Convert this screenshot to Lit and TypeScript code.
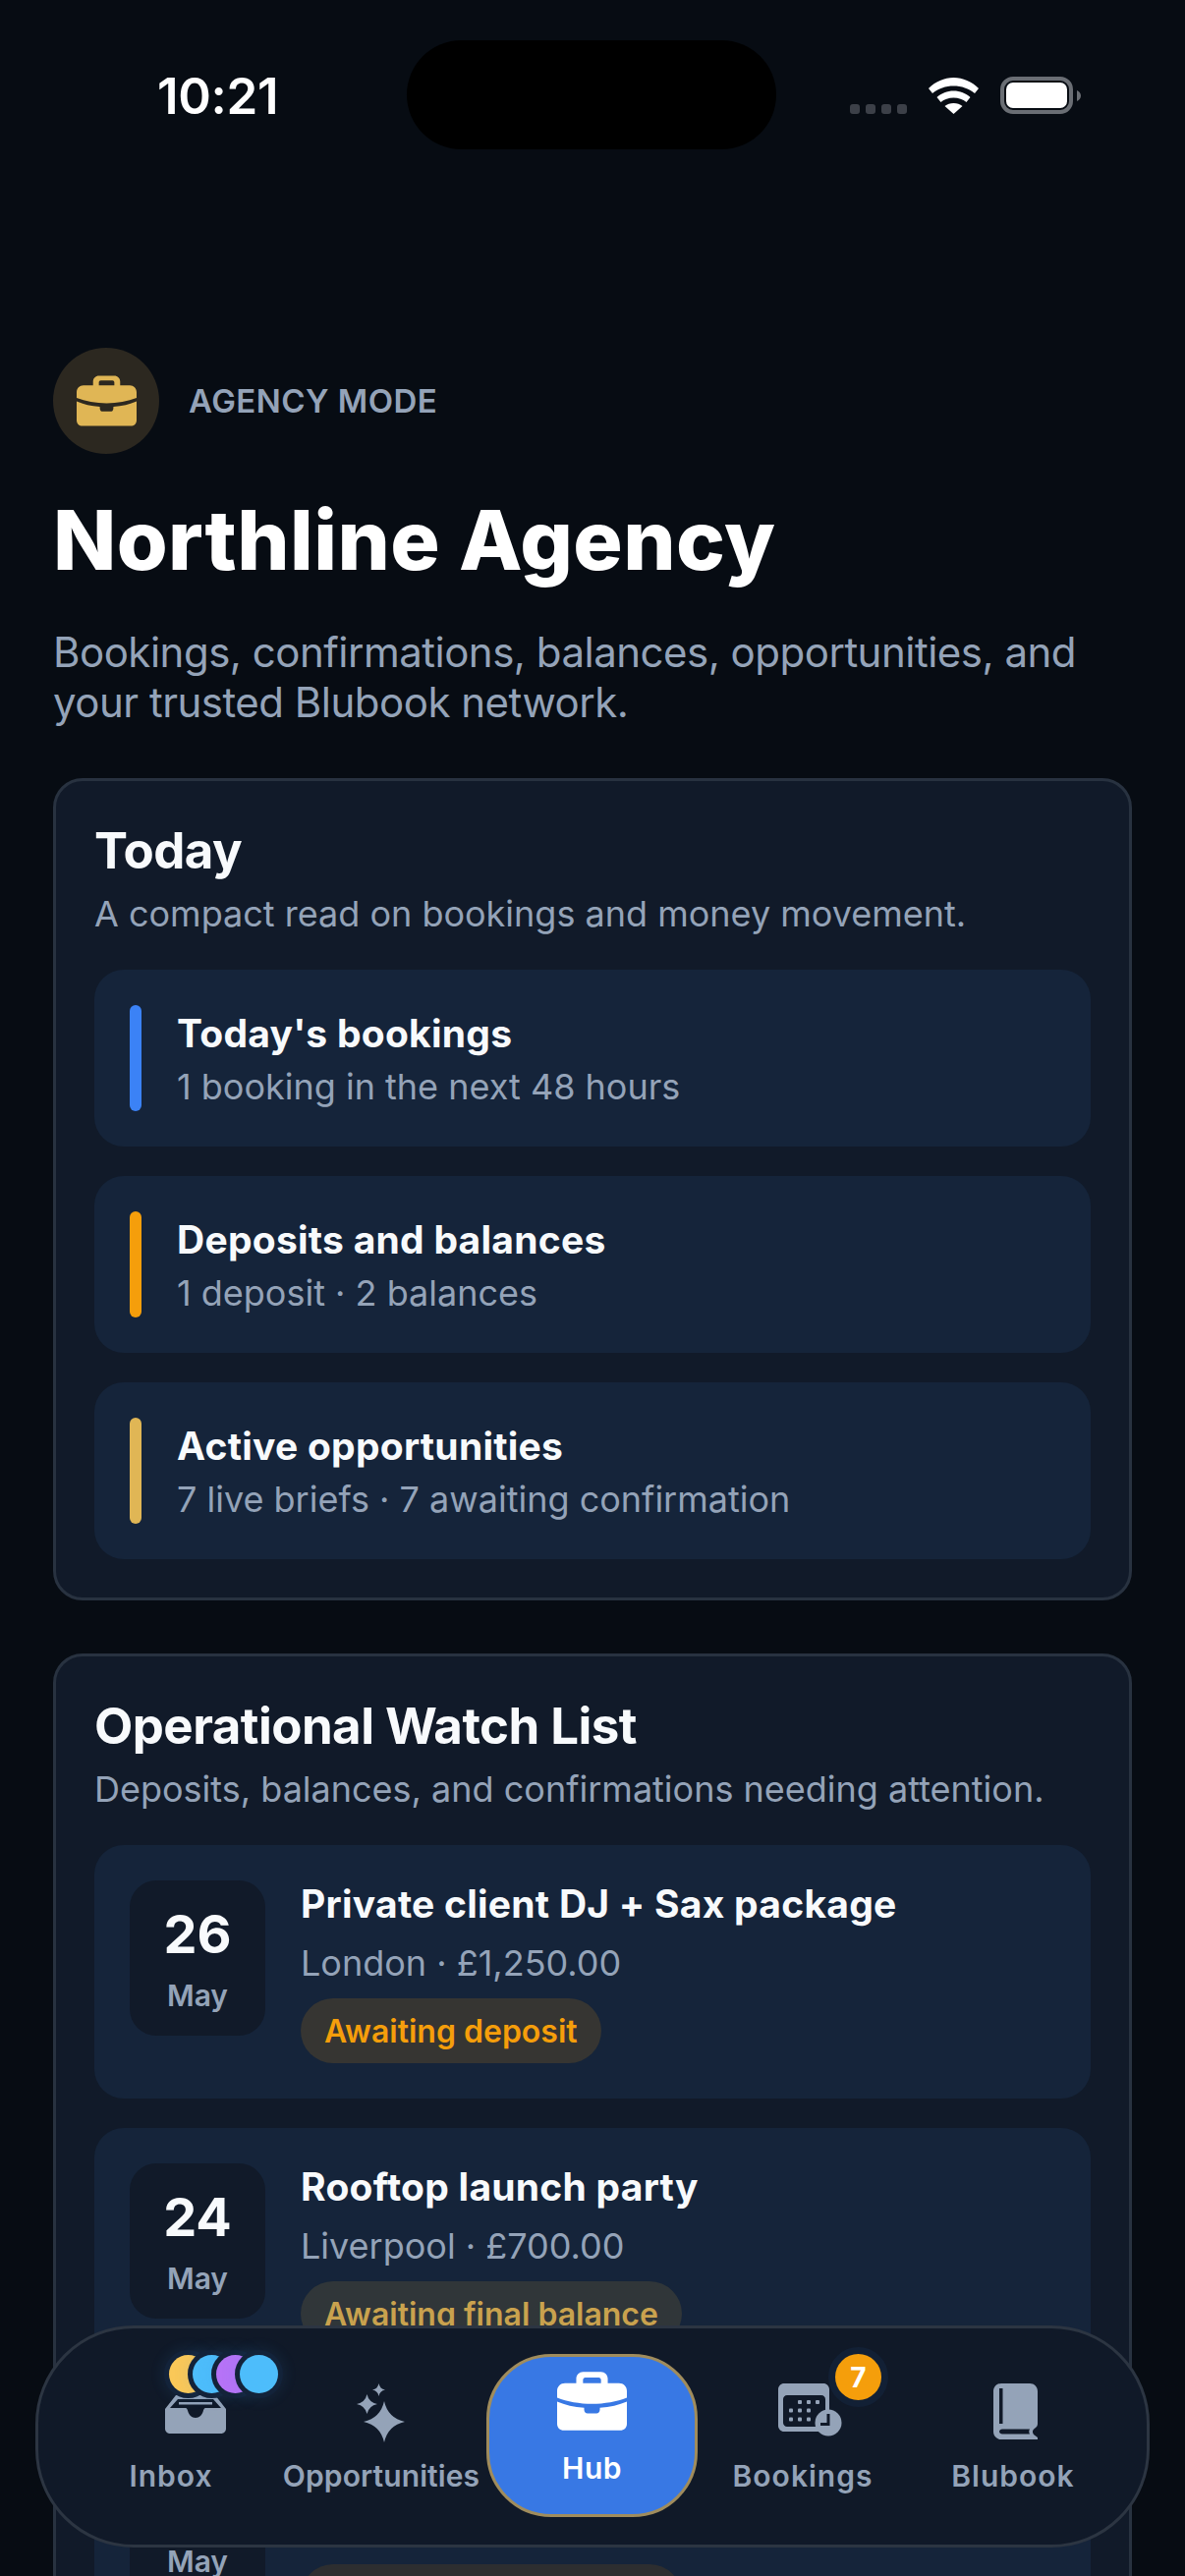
import { LitElement, html, css, svg } from "lit";
import { customElement } from "lit/decorators.js";

const briefcase = svg`
  <path fill-rule="evenodd" d="M17 10V6C17 2.700 19.700 0 23 0H39C42.300 0 45 2.700 45 6V10H55C59 10 62 13 62 17V23C53 26.500 42 28.500 31 28.500C20 28.500 9 26.500 0 23V17C0 13 3 10 7 10H17ZM23 10H39V7C39 5.900 38.100 5 37 5H25C23.900 5 23 5.900 23 7V10Z"/>
  <path d="M0 26.500C7 29.500 15 31.500 24 32V33.500C24 36 25.500 37 27 37H35C36.500 37 38 36 38 33.500V32C47 31.500 55 29.500 62 26.500V46C62 49.500 59.500 52 56 52H6C2.500 52 0 49.500 0 46V26.500Z"/>
`;

const summary = [
  ["blue", "Today's bookings", "1 booking in the next 48 hours"],
  ["amber", "Deposits and balances", "1 deposit · 2 balances"],
  ["gold", "Active opportunities", "7 live briefs · 7 awaiting confirmation"],
];
const events = [
  ["26", "Private client DJ + Sax package", "London · £1,250.00", "Awaiting deposit", "dep"],
  ["24", "Rooftop launch party", "Liverpool · £700.00", "Awaiting final balance", "bal"],
  ["22", "Summer garden social", "Manchester · £950.00", "Awaiting confirmation", "conf"],
];

@customElement("app-root")
export class AppRoot extends LitElement {
  static styles = css`
    :host {
      display: block;
      position: relative;
      width: 1206px;
      height: 2622px;
      overflow: hidden;
      background: #070c13;
      font-family: Inter, "Noto Sans", sans-serif;
      color: #f8fafc;
    }
    .status {
      display: flex;
      align-items: flex-start;
      height: 354px;
      box-sizing: border-box;
      padding: 41px 0 0 160px;
    }
    .time {
      width: 254px;
      margin-top: 27px;
      font-size: 51px;
      line-height: 60px;
      font-weight: 600;
      color: #fff;
      letter-spacing: -0.3px;
    }
    .island {
      width: 376px;
      height: 111px;
      border-radius: 56px;
      background: #000;
    }
    .sys {
      display: flex;
      align-items: flex-end;
      margin: 37px 0 0 75px;
    }
    .dots { display: flex; gap: 6px; margin: 0 22px 0 0; }
    .dots i { width: 10px; height: 10px; border-radius: 3px; background: #3c4048; display: block; }
    .wifi { width: 51px; height: 37px; margin-right: 22px; }
    .battery { width: 82px; height: 38px; }
    main { padding: 0 54px; }
    .mode { display: flex; align-items: center; gap: 30px; }
    .mode-icon {
      width: 108px;
      height: 108px;
      border-radius: 50%;
      background: #2c2820;
      display: flex;
      align-items: center;
      justify-content: center;
    }
    .mode-icon svg { width: 61px; height: 52px; fill: #e0b655; }
    .mode-label {
      font-size: 33px;
      font-weight: 600;
      letter-spacing: 0.45px;
      color: #94a3b8;
    }
    h1 {
      margin: 37px 0 0;
      font-size: 84px;
      line-height: 102px;
      font-weight: 800;
      letter-spacing: 0.4px;
      color: #fff;
    }
    .lede {
      margin: 37px 0 0;
      font-size: 42px;
      line-height: 51px;
      font-weight: 400;
      letter-spacing: -0.5px;
      color: #94a3b8;
    }
    .card {
      margin-top: 52px;
      box-sizing: border-box;
      background: #111a29;
      border: 3px solid #283240;
      border-radius: 30px;
      padding: 41px 39px 39px;
    }
    .card + .card { margin-top: 54px; }
    h2 {
      margin: 0;
      font-size: 51px;
      line-height: 60px;
      font-weight: 700;
      letter-spacing: -0.55px;
      color: #f8fafc;
    }
    .sub {
      margin: 12px 0 0;
      font-size: 36px;
      line-height: 45px;
      color: #94a3b8;
    }
    .rows { display: flex; flex-direction: column; gap: 30px; margin-top: 34px; }
    .row {
      background: #15243a;
      border-radius: 30px;
      display: flex;
      align-items: center;
      gap: 36px;
      height: 180px;
      box-sizing: border-box;
      padding: 0 36px;
    }
    .bar { width: 12px; height: 108px; border-radius: 6px; flex: none; }
    .blue { background: #3b82f6; }
    .amber { background: #f59e0b; }
    .gold { background: #e0b655; }
    .t { font-size: 39px; line-height: 48px; font-weight: 700; letter-spacing: 0.25px; color: #f8fafc; }
    .d { margin-top: 8px; font-size: 36px; line-height: 45px; color: #94a3b8; }
    .row-text { padding-top: 3px; }
    .event {
      background: #15243a;
      border-radius: 30px;
      display: flex;
      gap: 36px;
      height: 258px;
      box-sizing: border-box;
      padding: 36px;
    }
    .date {
      width: 138px;
      height: 158px;
      box-sizing: border-box;
      flex: none;
      background: #111a29;
      border-radius: 27px;
      display: flex;
      flex-direction: column;
      align-items: center;
      padding-top: 25px;
    }
    .date b { font-size: 54px; line-height: 60px; font-weight: 700; }
    .date span { margin-top: 14px; font-size: 30px; line-height: 36px; font-weight: 600; color: #94a3b8; }
    .info { display: flex; flex-direction: column; align-items: flex-start; }
    .info .d { margin-top: 14px; }
    .pill {
      margin-top: 13px;
      height: 66px;
      padding: 0 24px;
      border-radius: 33px;
      display: flex;
      align-items: center;
      font-size: 32px;
      font-weight: 600;
    }
    .dep { background: #363532; color: #f59e0b; }
    .bal { background: #303639; color: #c9a24e; }
    .conf { background: #2d2e30; color: #c9a24e; }
    nav {
      position: absolute;
      left: 36px;
      top: 2367px;
      width: 1134px;
      height: 226px;
      box-sizing: border-box;
      border: 3px solid #2c3542;
      border-radius: 100px;
      background: #101928;
      display: flex;
      padding-left: 28px;
      font-size: 30px;
      font-weight: 600;
    }
    .tab {
      position: relative;
      flex: none;
      width: 214px;
      padding-top: 56px;
      display: flex;
      flex-direction: column;
      align-items: center;
      color: #94a3b8;
      letter-spacing: 1px;
    }
    .tab .ico { height: 60px; display: flex; align-items: flex-start; }
    .tab svg { fill: #94a3b8; display: block; }
    .tab .label { margin-top: 15px; line-height: 38px; white-space: nowrap; }
    .tight { letter-spacing: 0.1px; }
    .inbox-ico { width: 62px; height: 39px; margin: 12px 0 0 50px; }
    .stars-ico { width: 50px; height: 60px; }
    .cal-ico { width: 66px; height: 60px; margin-left: 15px; }
    .book-ico { width: 45px; height: 57px; margin-left: 5px; }
    .hand { fill: none; stroke: #101928; stroke-width: 3; }
    .hub {
      flex: none;
      width: 215px;
      height: 166px;
      margin: 26px 0 0;
      padding-top: 15px;
      box-sizing: border-box;
      border: 3px solid #a08c5c;
      border-radius: 66px;
      background: #3878e4;
      color: #fff;
      letter-spacing: 0.5px;
      display: flex;
      flex-direction: column;
      align-items: center;
    }
    .hub svg { width: 71px; height: 60px; fill: #fff; display: block; }
    .hub .label { margin-top: 19px; line-height: 38px; }
    .stack { position: absolute; top: 27px; left: 105px; display: flex; }
    .stack i {
      display: block;
      flex: none;
      width: 39px;
      height: 39px;
      border-radius: 50%;
      margin-right: -15px;
      box-shadow: 0 0 0 5px #13233a, 0 0 14px 7px rgba(60, 150, 230, .1);
    }
    .stack .y { background: #fac858; }
    .stack .b { background: #4dbdfb; }
    .stack .p { background: #b673f7; }
    .badge {
      position: absolute;
      top: 26px;
      left: 140px;
      width: 47px;
      height: 47px;
      border-radius: 50%;
      background: #f59e0b;
      color: #fff;
      font-size: 28px;
      font-weight: 700;
      letter-spacing: 0;
      display: flex;
      align-items: center;
      justify-content: center;
      box-shadow: 0 0 0 7px rgba(20, 35, 58, .7);
    }
  `;

  render() {
    return html`
      <header class="status">
        <div class="time">10:21</div>
        <div class="island"></div>
        <div class="sys">
          <div class="dots"><i></i><i></i><i></i><i></i></div>
          <svg class="wifi" viewBox="0 0 51 37" fill="#fff">
            <path d="M25.500 0C35 0 44 4 51 11L47 16C41 11 33.500 8.500 25.500 8.500C17.500 8.500 10 11 4 16L0 11C7 4 16 0 25.500 0Z"/>
            <path d="M25.500 13.500C32 13.500 38 16 42.500 20L38.500 25C35 22 30.500 20.500 25.500 20.500C20.500 20.500 16 22 12.500 25L8.500 20C13 16 19 13.500 25.500 13.500Z"/>
            <path d="M25.500 26C29 26 32 27 34.500 29L25.500 37L16.500 29C19 27 22 26 25.500 26Z"/>
          </svg>
          <svg class="battery" viewBox="0 0 82 38">
            <rect x="2" y="2" width="70" height="34" rx="11" fill="none" stroke="#6a6e74" stroke-width="4"/>
            <rect x="6" y="6" width="62" height="26" rx="7" fill="#fff"/>
            <path fill="#6a6e74" d="M78 14C80.500 15 82 17 82 19.500C82 22 80.500 24 78 25Z"/>
          </svg>
        </div>
      </header>
      <main>
        <div class="mode">
          <div class="mode-icon"><svg viewBox="0 0 62 52">${briefcase}</svg></div>
          <div class="mode-label">AGENCY MODE</div>
        </div>
        <h1>Northline Agency</h1>
        <p class="lede">Bookings, confirmations, balances, opportunities, and your trusted Blubook network.</p>
        <section class="card">
          <h2>Today</h2>
          <p class="sub">A compact read on bookings and money movement.</p>
          <div class="rows">
            ${summary.map(([c, t, d]) => html`
              <div class="row">
                <div class="bar ${c}"></div>
                <div class="row-text"><div class="t">${t}</div><div class="d">${d}</div></div>
              </div>`)}
          </div>
        </section>
        <section class="card">
          <h2>Operational Watch List</h2>
          <p class="sub">Deposits, balances, and confirmations needing attention.</p>
          <div class="rows">
            ${events.map(([n, t, d, p, k]) => html`
              <div class="event">
                <div class="date"><b>${n}</b><span>May</span></div>
                <div class="info">
                  <div class="t">${t}</div>
                  <div class="d">${d}</div>
                  <div class="pill ${k}">${p}</div>
                </div>
              </div>`)}
          </div>
        </section>
      </main>
      <nav>
        <div class="tab">
          <div class="ico">
            <svg class="inbox-ico" viewBox="0 0 62 39">
              <path fill-rule="evenodd" d="M11 0H51L62 14V34C62 36.800 59.800 39 57 39H5C2.200 39 0 36.800 0 34V14L11 0ZM13 4L5 13H21C22 13 22.500 14 23 15.500C24 20 27 23 31 23C35 23 38 20 39 15.500C39.500 14 40 13 41 13H57L49 4H13Z"/>
              <rect x="14" y="7" width="34" height="2.500"/>
            </svg>
          </div>
          <div class="stack"><i class="y"></i><i class="b"></i><i class="p"></i><i class="b"></i></div>
          <div class="label">Inbox</div>
        </div>
        <div class="tab">
          <div class="ico">
            <svg class="stars-ico" viewBox="0 0 50 60">
              <path d="M28 18Q31.800 35.200 49 39Q31.800 42.800 28 60Q24.200 42.800 7 39Q24.200 35.200 28 18Z"/>
              <path d="M10.500 11Q12.300 19.200 21 21Q12.300 22.800 10.500 31Q8.700 22.800 0 21Q8.700 19.200 10.500 11Z"/>
              <path d="M22.500 0Q23.500 5.500 29 6.500Q23.500 7.500 22.500 13Q21.500 7.500 16 6.500Q21.500 5.500 22.500 0Z"/>
            </svg>
          </div>
          <div class="label tight">Opportunities</div>
        </div>
        <div class="hub">
          <svg viewBox="0 0 62 52">${briefcase}</svg>
          <div class="label">Hub</div>
        </div>
        <div class="tab">
          <div class="ico">
            <svg class="cal-ico" viewBox="0 0 66 60">
              <path fill-rule="evenodd" d="M6 0H46C49.300 0 52 2.700 52 6V43C52 46.300 49.300 49 46 49H6C2.700 49 0 46.300 0 43V6C0 2.700 2.700 0 6 0ZM9 12C6.800 12 5 13.800 5 16V40C5 42.200 6.800 44 9 44H44C46.200 44 48 42.200 48 40V16C48 13.800 46.200 12 44 12H9Z"/>
              <rect x="20" y="17" width="4" height="4" rx="1"/><rect x="29" y="17" width="4" height="4" rx="1"/><rect x="38" y="17" width="4" height="4" rx="1"/>
              <rect x="11" y="25.500" width="4" height="4" rx="1"/><rect x="20" y="25.500" width="4" height="4" rx="1"/><rect x="29" y="25.500" width="4" height="4" rx="1"/>
              <rect x="11" y="34.500" width="4" height="4" rx="1"/><rect x="20" y="34.500" width="4" height="4" rx="1"/><rect x="29" y="34.500" width="4" height="4" rx="1"/>
              <circle cx="51" cy="40" r="13.500"/>
              <path class="hand" d="M51 31V41.500H43"/>
            </svg>
          </div>
          <div class="badge">7</div>
          <div class="label">Bookings</div>
        </div>
        <div class="tab">
          <div class="ico">
            <svg class="book-ico" viewBox="0 0 45 57">
              <path fill-rule="evenodd" d="M8 0H37C41.500 0 45 3.500 45 8V41C45 43 44 44 43 45C40 47 39 49 41 52L45 55V57H8C3.500 57 0 53.500 0 49V8C0 3.500 3.500 0 8 0ZM6 5V41H9.500V5H6ZM9 46.500C7.500 46.500 6 47.800 6 49C6 50.200 7.500 51.500 9 51.500H37C36 50 36 48 37 46.500H9Z"/>
            </svg>
          </div>
          <div class="label">Blubook</div>
        </div>
      </nav>
    `;
  }
}
